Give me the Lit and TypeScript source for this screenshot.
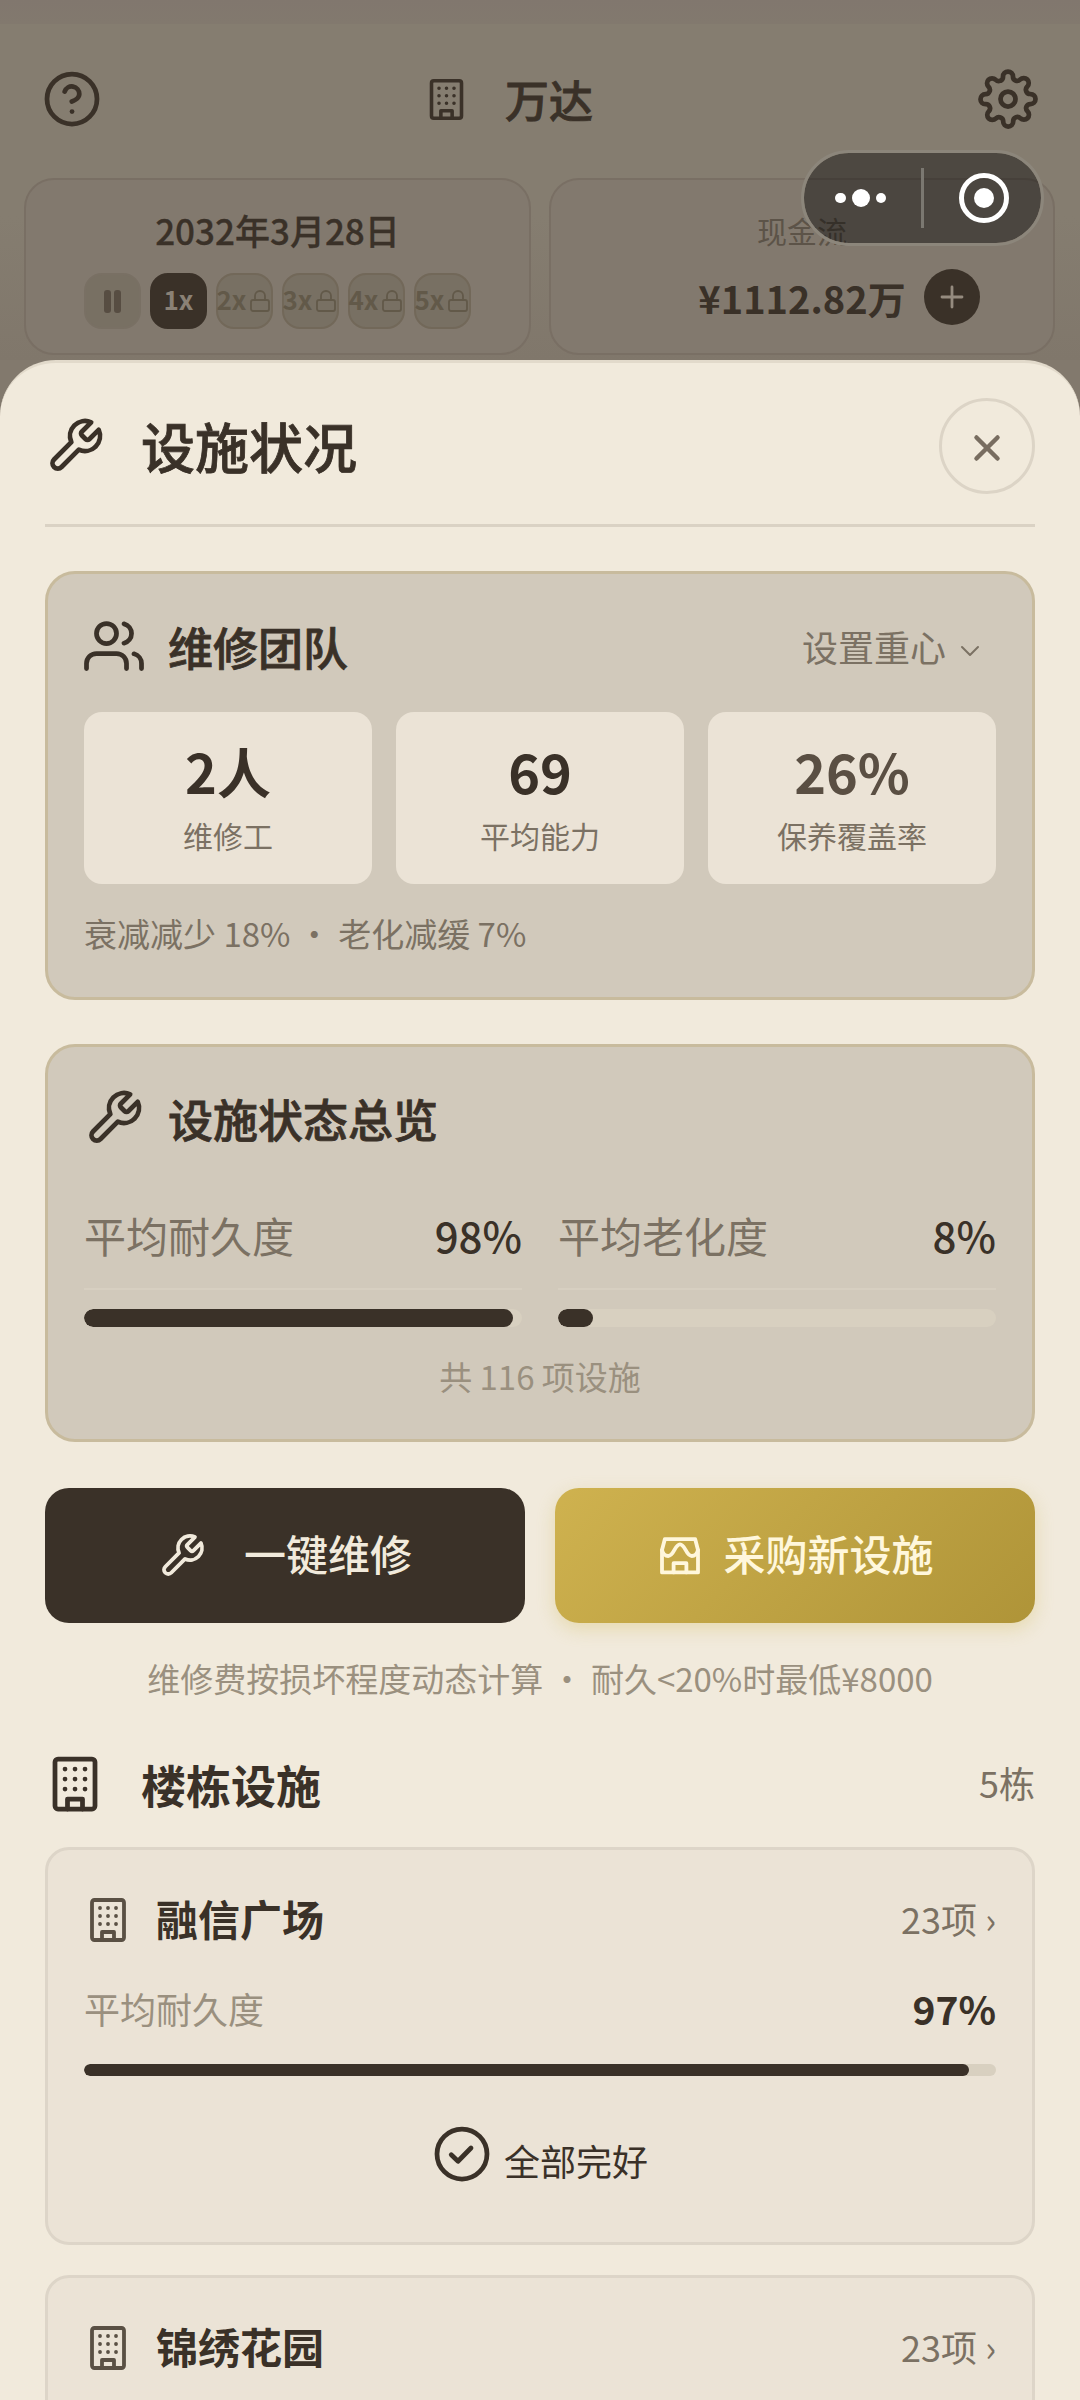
import { LitElement, html, css, svg, nothing } from "lit";
import { customElement, property } from "lit/decorators.js";

const ICONS: Record<string, unknown> = {
  help: svg`<circle cx="12" cy="12" r="10"/><path d="M9.09 9a3 3 0 0 1 5.83 1c0 2-3 3-3 3"/><path d="M12 17h.01"/>`,
  gear: svg`<circle cx="12" cy="12" r="3"/><path d="M19.4 15a1.65 1.65 0 0 0 .33 1.82l.06.06a2 2 0 0 1 0 2.83 2 2 0 0 1-2.83 0l-.06-.06a1.65 1.65 0 0 0-1.82-.33 1.65 1.65 0 0 0-1 1.51V21a2 2 0 0 1-2 2 2 2 0 0 1-2-2v-.09A1.65 1.65 0 0 0 9 19.4a1.65 1.65 0 0 0-1.82.33l-.06.06a2 2 0 0 1-2.83 0 2 2 0 0 1 0-2.83l.06-.06a1.65 1.65 0 0 0 .33-1.82 1.65 1.65 0 0 0-1.51-1H3a2 2 0 0 1-2-2 2 2 0 0 1 2-2h.09A1.65 1.65 0 0 0 4.6 9a1.65 1.65 0 0 0-.33-1.82l-.06-.06a2 2 0 0 1 0-2.83 2 2 0 0 1 2.83 0l.06.06a1.65 1.65 0 0 0 1.82.33H9a1.65 1.65 0 0 0 1-1.51V3a2 2 0 0 1 2-2 2 2 0 0 1 2 2v.09a1.65 1.65 0 0 0 1 1.51 1.65 1.65 0 0 0 1.82-.33l.06-.06a2 2 0 0 1 2.83 0 2 2 0 0 1 0 2.83l-.06.06a1.65 1.65 0 0 0-.33 1.82V9a1.65 1.65 0 0 0 1.51 1H21a2 2 0 0 1 2 2 2 2 0 0 1-2 2h-.09a1.65 1.65 0 0 0-1.51 1z"/>`,
  building: svg`<rect x="4" y="2" width="16" height="20" rx="1.2"/><path d="M9 22v-4h6v4M8 6h.01M12 6h.01M16 6h.01M8 10h.01M12 10h.01M16 10h.01M8 14h.01M12 14h.01M16 14h.01"/>`,
  lock: svg`<rect x="3" y="11" width="18" height="11" rx="2"/><path d="M7 11V7a5 5 0 0 1 10 0v4"/>`,
  wrench: svg`<path d="M14.7 6.3a1 1 0 0 0 0 1.4l1.6 1.6a1 1 0 0 0 1.4 0l3.77-3.77a6 6 0 0 1-7.94 7.94l-6.91 6.91a2.12 2.12 0 0 1-3-3l6.91-6.91a6 6 0 0 1 7.94-7.94l-3.76 3.76z"/>`,
  users: svg`<path d="M17 21v-2a4 4 0 0 0-4-4H5a4 4 0 0 0-4 4v2"/><circle cx="9" cy="7" r="4"/><path d="M23 21v-2a4 4 0 0 0-3-3.87M16 3.13a4 4 0 0 1 0 7.75"/>`,
  shop: svg`<path d="M4.4 3.6h15.2L21 9v11.2H3V9z"/><path d="M3 9c.4 1.800 1.700 3 3.100 3 3 0 3.200-5.800 5.900-5.800s2.900 5.800 5.900 5.800c1.400 0 2.700-1.200 3.100-3"/><path d="M8.800 20.200v-4.600h6.400v4.600"/>`,
  check: svg`<circle cx="12" cy="12" r="10"/><path d="m7.700 12.300 2.700 2.600 5.200-5.300"/>`,
  close: svg`<path d="M6.500 6.500l11 11M17.500 6.500l-11 11"/>`,
  chevron: svg`<path d="M4 8l8 8 8-8"/>`,
  plus: svg`<path d="M12 2v20M2 12h20"/>`,
};

@customElement("ui-icon")
export class UiIcon extends LitElement {
  @property() name = "";
  @property({ type: Number }) stroke = 1.9;

  static styles = css`
    :host { display: block; flex: none; width: 60px; height: 60px; }
    svg { display: block; width: 100%; height: 100%; fill: none; stroke: currentColor; stroke-linecap: round; stroke-linejoin: round; }
  `;

  render() {
    return html`<svg viewBox="0 0 24 24" stroke-width=${this.stroke}>${ICONS[this.name]}</svg>`;
  }
}

interface Building {
  name: string;
  count: number;
  durability?: number;
}

const STATS = [
  { value: "2人", label: "维修工", soft: false },
  { value: "69", label: "平均能力", soft: false },
  { value: "26%", label: "保养覆盖率", soft: true },
];

const METRICS = [
  { label: "平均耐久度", value: 98 },
  { label: "平均老化度", value: 8 },
];

const BUILDINGS: Building[] = [
  { name: "融信广场", count: 23, durability: 97 },
  { name: "锦绣花园", count: 23 },
];

@customElement("app-root")
export class AppRoot extends LitElement {
  static styles = css`
    :host {
      display: block;
      position: relative;
      width: 1080px;
      height: 2400px;
      overflow: hidden;
      background: #82796d;
      color: #3a3128;
      font-family: "Noto Sans CJK SC", sans-serif;
    }
    * { box-sizing: border-box; }
    .semi { font-weight: 500; -webkit-text-stroke: 0.8px currentColor; }

    .backdrop { height: 360px; display: flex; flex-direction: column; background: linear-gradient(#857d70 60%, #80776b); }
    .status { height: 24px; flex: none; background: linear-gradient(#81776e, #82796e); }
    .topbar { height: 154px; flex: none; padding: 0 42px 4px; display: flex; align-items: center; justify-content: space-between; }
    .brand { display: flex; align-items: center; gap: 36px; font-size: 44px; line-height: 60px; padding-right: 63px; }
    .brand ui-icon { width: 45px; height: 45px; }
    .panels { display: grid; grid-template-columns: 507px 506px; gap: 18px; padding-left: 24px; }
    .panel { height: 177px; padding-top: 25px; border: 2px solid #796f64; border-radius: 30px; background: #82796e; display: flex; flex-direction: column; align-items: center; gap: 18px; }
    .date { font-size: 35px; line-height: 50px; -webkit-text-stroke-width: 0.3px; }
    .speeds { display: flex; gap: 9px; }
    .speed { width: 57px; height: 56px; border-radius: 18px; border: 2px solid #726859; background: #787063; color: #625949; font-size: 26px; font-weight: 600; line-height: 48px; padding-bottom: 4px; display: flex; align-items: center; justify-content: center; gap: 2px; }
    .speed.on { background: #3a3128; border-color: #3a3128; color: #8a8175; }
    .speed.pause { border-color: #797064; gap: 3px; padding-bottom: 0; }
    .speed ui-icon { width: 24px; height: 24px; margin-top: 4px; }
    .pausebar { width: 7px; height: 23px; border-radius: 3px; background: #574d42; }
    .cashlabel { font-size: 30px; line-height: 50px; color: #5c5348; }
    .cash { display: flex; align-items: center; gap: 18px; padding-left: 74px; height: 56px; margin-top: -4px; font-size: 38px; font-weight: 600; }
    .add { width: 56px; height: 56px; border-radius: 50%; background: #3a3128; color: #958b7f; display: grid; place-items: center; }
    .add ui-icon { width: 24px; height: 24px; }

    .capsule { position: absolute; left: 801px; top: 150px; width: 243px; height: 96px; border-radius: 48px; border: 3px solid #8c867b; background: rgba(0, 0, 0, 0.42); background-clip: padding-box; display: grid; grid-template-columns: 117px 3px 1fr; align-items: center; }
    .dots { display: flex; align-items: center; justify-content: center; gap: 6px; padding-right: 4px; }
    .dot { width: 10.500px; height: 10.500px; border-radius: 50%; background: #fff; }
    .dot.big { width: 18px; height: 18px; }
    .split { width: 3px; height: 60px; background: #7b7871; }
    .target { width: 50px; height: 50px; justify-self: center; border: 5px solid #fff; border-radius: 50%; display: grid; place-items: center; margin-left: 3px; }
    .target .dot { width: 20px; height: 20px; }

    .sheet { height: 2040px; padding: 0 45px; border-top: 3px solid #e2dacb; border-radius: 56px 56px 0 0; background: #f1eadc; }
    .head { height: 164px; padding: 35px 0 30px; border-bottom: 3px solid #dad2c4; display: flex; align-items: center; justify-content: space-between; }
    .title { display: flex; align-items: center; gap: 36px; font-size: 54px; line-height: 72px; }
    .close { width: 96px; height: 96px; border: 3px solid #dcd4c6; border-radius: 50%; color: #786d60; display: grid; place-items: center; padding-top: 4px; }
    .close ui-icon { width: 46px; height: 46px; }

    .card { border: 3px solid #c8bb9d; border-radius: 30px; background: #d1c9bb; padding: 42px 36px 0; margin-top: 44px; height: 429px; }
    .card.overview { height: 398px; margin-top: 44px; padding-top: 41px; }
    .cardhead { height: 60px; display: flex; align-items: center; gap: 24px; font-size: 45px; }
    .focus { margin-left: auto; margin-right: 14px; display: flex; align-items: center; gap: 12px; font-size: 36px; color: #7b7163; }
    .focus ui-icon { width: 24px; height: 24px; margin-top: 9px; }
    .stats { display: grid; grid-template-columns: repeat(3, 1fr); gap: 24px; margin-top: 36px; }
    .stat { height: 172px; border-radius: 18px; background: #ebe3d6; padding-top: 26px; display: flex; flex-direction: column; align-items: center; gap: 9px; }
    .value { font-size: 54px; font-weight: 600; line-height: 66px; }
    .value.soft { color: #5a4f43; }
    .statlabel { font-size: 30px; line-height: 44px; color: #7b7163; }
    .note { font-size: 33px; line-height: 50px; color: #7b7163; margin-top: 24px; }

    .metrics { display: grid; grid-template-columns: repeat(2, 1fr); gap: 36px; margin-top: 36px; }
    .metric { padding: 18px 0 20px; border-bottom: 2px solid #d7cfc1; display: flex; justify-content: space-between; line-height: 66px; font-size: 42px; color: #7b7163; }
    .metric .num { font-weight: 500; color: #3a3128; }
    .track { height: 18px; margin-top: 19px; border-radius: 9px; background: #d8d0c0; overflow: hidden; }
    .fill { height: 100%; border-radius: 9px; background: #3a3128; }
    .track.thin { height: 12px; margin-top: 29px; }
    .total { font-size: 33px; line-height: 50px; text-align: center; margin-top: 24px; color: #9a907f; }

    .actions { display: grid; grid-template-columns: 1fr 1fr; gap: 30px; margin-top: 46px; }
    .action { height: 135px; border-radius: 24px; display: flex; align-items: center; justify-content: center; gap: 38px; font-size: 42px; font-weight: 500; background: #3a3128; color: #f1eadc; }
    .action span { padding-bottom: 6px; }
    .action ui-icon { width: 48px; height: 48px; }
    .action.buy { gap: 19px; color: #fff7dc; background: linear-gradient(135deg, #cfb24f, #af9438); box-shadow: 0 6px 18px rgba(208, 185, 80, 0.32); }
    .hint { font-size: 33px; line-height: 50px; text-align: center; margin-top: 30px; color: #9a907f; }

    .section { height: 60px; margin-top: 51px; display: flex; align-items: center; gap: 36px; font-size: 45px; font-weight: 600; }
    .side { margin-left: auto; font-size: 36px; font-weight: 400; color: #7b7163; padding-bottom: 4px; }
    .building { height: 398px; margin-top: 33px; padding: 40px 36px 0; border: 3px solid #ddd5c8; border-radius: 24px; background: #ebe3d6; }
    .building + .building { margin-top: 30px; }
    .bhead { height: 60px; display: flex; align-items: center; gap: 24px; font-size: 42px; font-weight: 600; }
    .bhead .name { padding-bottom: 5px; }
    .bhead ui-icon { width: 48px; height: 48px; color: #5a5044; }
    .brow { display: flex; align-items: center; justify-content: space-between; margin-top: 31px; line-height: 54px; font-size: 36px; color: #9a907f; }
    .brow .num { font-size: 39px; font-weight: 600; color: #3a3128; }
    .good { margin-top: 48px; display: flex; justify-content: center; gap: 12px; font-size: 36px; line-height: 60px; }
    .good .text { padding-top: 6px; }
  `;

  private renderBuilding(b: Building) {
    return html`
      <div class="building">
        <div class="bhead">
          <ui-icon name="building"></ui-icon><span class="name">${b.name}</span>
          <span class="side">${b.count}项 ›</span>
        </div>
        ${b.durability === undefined
          ? nothing
          : html`
              <div class="brow"><span>平均耐久度</span><span class="num">${b.durability}%</span></div>
              <div class="track thin"><div class="fill" style="width:${b.durability}%"></div></div>
              <div class="good"><ui-icon name="check"></ui-icon><span class="text">全部完好</span></div>
            `}
      </div>
    `;
  }

  render() {
    return html`
      <div class="backdrop">
        <div class="status"></div>
        <div class="topbar">
          <ui-icon name="help"></ui-icon>
          <div class="brand"><ui-icon name="building"></ui-icon><span class="semi">万达</span></div>
          <ui-icon name="gear"></ui-icon>
        </div>
        <div class="panels">
          <div class="panel">
            <div class="semi date">2032年3月28日</div>
            <div class="speeds">
              <div class="speed pause"><div class="pausebar"></div><div class="pausebar"></div></div>
              <div class="speed on">1x</div>
              ${["2x", "3x", "4x", "5x"].map(
                (s) => html`<div class="speed"><span>${s}</span><ui-icon name="lock" stroke="1.800"></ui-icon></div>`
              )}
            </div>
          </div>
          <div class="panel">
            <div class="cashlabel">现金流</div>
            <div class="cash"><span>¥1112.82万</span><div class="add"><ui-icon name="plus" stroke="2.800"></ui-icon></div></div>
          </div>
        </div>
      </div>

      <div class="capsule">
        <div class="dots"><div class="dot"></div><div class="dot big"></div><div class="dot"></div></div>
        <div class="split"></div>
        <div class="target"><div class="dot"></div></div>
      </div>

      <div class="sheet">
        <div class="head">
          <div class="title"><ui-icon name="wrench"></ui-icon><span class="semi">设施状况</span></div>
          <div class="close"><ui-icon name="close" stroke="2.300"></ui-icon></div>
        </div>

        <div class="card">
          <div class="cardhead">
            <ui-icon name="users"></ui-icon><span class="semi">维修团队</span>
            <div class="focus"><span>设置重心</span><ui-icon name="chevron" stroke="2"></ui-icon></div>
          </div>
          <div class="stats">
            ${STATS.map(
              (s) => html`<div class="stat"><div class="value ${s.soft ? "soft" : ""}">${s.value}</div><div class="statlabel">${s.label}</div></div>`
            )}
          </div>
          <div class="note">衰减减少 18% • 老化减缓 7%</div>
        </div>

        <div class="card overview">
          <div class="cardhead"><ui-icon name="wrench"></ui-icon><span class="semi">设施状态总览</span></div>
          <div class="metrics">
            ${METRICS.map(
              (m) => html`<div>
                <div class="metric"><span>${m.label}</span><span class="num">${m.value}%</span></div>
                <div class="track"><div class="fill" style="width:${m.value}%"></div></div>
              </div>`
            )}
          </div>
          <div class="total">共 116 项设施</div>
        </div>

        <div class="actions">
          <div class="action"><ui-icon name="wrench"></ui-icon><span>一键维修</span></div>
          <div class="action buy"><ui-icon name="shop"></ui-icon><span>采购新设施</span></div>
        </div>
        <div class="hint">维修费按损坏程度动态计算 • 耐久&lt;20%时最低¥8000</div>

        <div class="section"><ui-icon name="building"></ui-icon><span>楼栋设施</span><span class="side">5栋</span></div>
        ${BUILDINGS.map((b) => this.renderBuilding(b))}
      </div>
    `;
  }
}
